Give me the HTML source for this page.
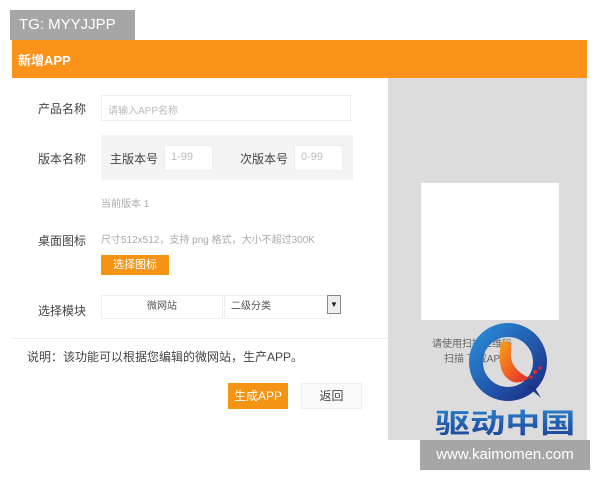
<!DOCTYPE html>
<html><head><meta charset="utf-8"><style>
*{margin:0;padding:0;box-sizing:border-box}
body{width:600px;height:480px;background:#fff;position:relative;overflow:hidden;font-family:"Liberation Sans","Noto Sans CJK SC",sans-serif;color:#555;font-size:11px}
.a{position:absolute}
.in{background:#fff;border:1px solid #eee;color:#bbb}
</style></head><body>
<div class="a" style="left:12px;top:40px;width:575px;height:38px;background:#fb931b"></div>
<div class="a" style="left:18px;top:50px;color:#fff;font-size:13px;font-weight:bold">新增APP</div>
<div class="a" style="left:10px;top:10px;width:125px;height:30px;background:#a6a6a6;color:#fff;font-size:15px;line-height:30px;padding-left:9px">TG: MYYJJPP</div>
<div class="a" style="left:388px;top:78px;width:199px;height:362px;background:#dcdcdc"></div>
<div class="a" style="left:421px;top:183px;width:138px;height:137px;background:#fff"></div>
<div class="a" style="left:432px;top:335px;color:#666;font-size:10px">请使用扫描二维码</div>
<div class="a" style="left:444px;top:350px;color:#666;font-size:10px">扫描 下载APA</div>
<svg class="a" style="left:465px;top:322px" width="90" height="82" viewBox="0 0 90 82">
<defs><linearGradient id="g" x1="0" y1="0" x2="1" y2="1"><stop offset="0" stop-color="#2a8ad8"/><stop offset="1" stop-color="#1c2f86"/></linearGradient>
<linearGradient id="o" x1="0" y1="0" x2="1" y2="1"><stop offset="0" stop-color="#f7a21b"/><stop offset="1" stop-color="#e5282a"/></linearGradient></defs>
<ellipse cx="43" cy="40" rx="32" ry="32" fill="none" stroke="url(#g)" stroke-width="14"/>
<path d="M60 62 L76 76 L70 66Z" fill="#1c2f86"/>
<path d="M36 20 Q48 16 46 30 Q44 46 64 56 Q50 66 40 54 Q32 44 36 20Z" fill="url(#o)"/>
<circle cx="70" cy="50" r="2" fill="#e5282a"/><circle cx="75" cy="46" r="1.6" fill="#e5282a"/><circle cx="66" cy="55" r="1.6" fill="#e5282a"/>
</svg>
<div class="a" style="left:435px;top:402px;font-size:27px;font-weight:bold;letter-spacing:0;transform:scaleX(1.3);transform-origin:left;color:#1f5aa8;background:linear-gradient(#2c8ad6,#1b3e92);-webkit-background-clip:text;background-clip:text;-webkit-text-fill-color:transparent">驱动中国</div>
<div class="a" style="left:420px;top:440px;width:170px;height:30px;background:#a6a6a6;color:#fff;font-size:15px;line-height:30px;text-align:center">www.kaimomen.com</div>

<div class="a" style="left:38px;top:100px;font-size:12px;color:#444">产品名称</div>
<div class="a in" style="left:101px;top:95px;width:250px;height:26px;padding:6px 6px;font-size:10px">请输入APP名称</div>
<div class="a" style="left:101px;top:135px;width:252px;height:45px;background:#f4f4f4"></div>
<div class="a" style="left:38px;top:150px;font-size:12px;color:#444">版本名称</div>
<div class="a" style="left:110px;top:150px;font-size:12px;color:#444">主版本号</div>
<div class="a in" style="left:164px;top:145px;width:49px;height:26px;padding:5px 6px;font-size:11px">1-99</div>
<div class="a" style="left:240px;top:150px;font-size:12px;color:#444">次版本号</div>
<div class="a in" style="left:294px;top:145px;width:49px;height:26px;padding:5px 6px;font-size:11px">0-99</div>
<div class="a" style="left:101px;top:195px;font-size:10px;color:#aaa">当前版本 1</div>
<div class="a" style="left:38px;top:232px;font-size:12px;color:#444">桌面图标</div>
<div class="a" style="left:101px;top:231px;font-size:10px;color:#aaa">尺寸512x512，支持 png 格式，大小不超过300K</div>
<div class="a" style="left:101px;top:255px;width:68px;height:20px;background:#f39415;color:#fff;font-size:11px;line-height:20px;text-align:center">选择图标</div>
<div class="a" style="left:38px;top:302px;font-size:12px;color:#444">选择模块</div>
<div class="a in" style="left:101px;top:295px;width:122px;height:24px;color:#555;font-size:10px;text-align:center;line-height:22px">微网站</div>
<div class="a in" style="left:224px;top:295px;width:107px;height:24px;color:#555;font-size:10px;line-height:22px;padding-left:6px">二级分类</div>
<div class="a" style="left:327px;top:295px;width:14px;height:19px;border:1px solid #888;background:#eee;font-size:8px;text-align:center;line-height:17px;color:#222">▼</div>
<div class="a" style="left:12px;top:338px;width:376px;height:1px;background:#eee"></div>
<div class="a" style="left:27px;top:348px;font-size:12px;color:#444">说明：该功能可以根据您编辑的微网站，生产APP。</div>
<div class="a" style="left:228px;top:383px;width:60px;height:26px;background:#f39415;color:#fff;font-size:12px;line-height:26px;text-align:center">生成APP</div>
<div class="a" style="left:301px;top:383px;width:61px;height:26px;background:#fafafa;border:1px solid #eee;color:#444;font-size:12px;line-height:24px;text-align:center">返回</div>
</body></html>
